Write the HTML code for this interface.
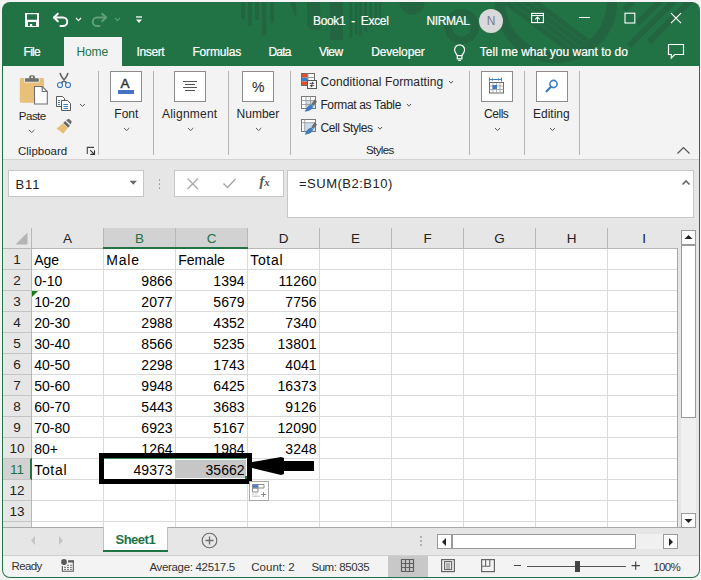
<!DOCTYPE html>
<html><head><meta charset="utf-8"><style>
html,body{margin:0;padding:0;}
body{width:701px;height:580px;overflow:hidden;position:relative;background:#f4f4f4;font-family:"Liberation Sans",sans-serif;}
.b{position:absolute;}
.t{position:absolute;white-space:nowrap;}
</style></head><body>
<div class="b" style="left:0px;top:0px;width:701px;height:580px;background:#f4f4f4;"></div>
<div class="b" style="left:2px;top:2px;width:698px;height:576px;background:#217346;border-radius:8px;"></div>
<svg class="b" style="left:0;top:0" width="701" height="66" viewBox="0 0 701 66">
<defs><clipPath id="wc"><rect x="2" y="2" width="698" height="64" rx="8"/></clipPath></defs>
<g clip-path="url(#wc)" fill="#226540">
<rect x="241" y="0" width="4" height="19"/>
<rect x="248" y="0" width="4" height="26"/>
<rect x="255" y="0" width="4" height="20"/>
<rect x="262" y="0" width="4.3" height="35"/>
<rect x="270" y="0" width="4" height="23"/>
<path d="M289 0 H296.2 V17 Z"/>
<path d="M307 0 H320.2 V30 H314 Q307 30 307 23 Z"/>
<rect x="330" y="0" width="12.8" height="39.7"/>
<rect x="349.6" y="0" width="2.6" height="38"/>
<rect x="354.8" y="0" width="2.7" height="34"/>
<rect x="359" y="0" width="3" height="35.4"/>
<rect x="364" y="0" width="3" height="32"/>
<rect x="369.3" y="0" width="2.7" height="28"/>
<rect x="374.5" y="0" width="2.5" height="26"/>
<rect x="378.7" y="0" width="2.3" height="22"/>
<circle cx="412" cy="2" r="12.6"/>
</g>
<defs><clipPath id="rc"><circle cx="556" cy="1.4" r="50.5"/></clipPath></defs>
<g clip-path="url(#wc)" fill="none" stroke="#226540">
<circle cx="461.5" cy="26.5" r="13.7" stroke-width="7.5"/>
<circle cx="556" cy="1.6" r="56" stroke-width="10.5"/>
</g>
<g clip-path="url(#wc)"><g clip-path="url(#rc)" stroke="#226540" stroke-width="5">
<path d="M500 -2 L580 58 M510 -2 L590 58 M520 -2 L600 58 M530 -2 L610 58"/>
</g></g>
<g clip-path="url(#wc)" stroke="#226540" stroke-width="6">
<path d="M629 46 L677 -2 M649 42 L693 -2 M637 24 L663 -2 M624 10 L636 -2"/>
</g>
</svg>
<div class="b" style="left:3px;top:66px;width:696px;height:93px;background:#f3f3f3;"></div>
<div class="b" style="left:3px;top:159px;width:696px;height:1px;background:#d2d2d2;"></div>
<div class="b" style="left:3px;top:160px;width:696px;height:367px;background:#e6e6e6;"></div>
<div class="b" style="left:3px;top:527px;width:696px;height:28px;background:#e6e6e6;"></div>
<div class="b" style="left:3px;top:555px;width:696px;height:1px;background:#d0d0d0;"></div>
<div class="b" style="left:3px;top:556px;width:696px;height:21px;background:#f3f3f3;border-radius:0 0 7px 7px;"></div>
<div class="b" style="left:64px;top:37px;width:58px;height:29px;background:#f3f3f3;"></div>
<div class="t" style="left:23.5px;top:46.04px;font-size:12px;line-height:12px;color:#ffffff;-webkit-text-stroke:0.2px #fff;letter-spacing:-0.7px;">File</div>
<div class="t" style="left:76.5px;top:46.04px;font-size:12px;line-height:12px;color:#217346;letter-spacing:-0.15px;">Home</div>
<div class="t" style="left:136.5px;top:46.04px;font-size:12px;line-height:12px;color:#ffffff;-webkit-text-stroke:0.2px #fff;letter-spacing:-0.37px;">Insert</div>
<div class="t" style="left:192.4px;top:46.04px;font-size:12px;line-height:12px;color:#ffffff;-webkit-text-stroke:0.2px #fff;letter-spacing:-0.15px;">Formulas</div>
<div class="t" style="left:268.5px;top:46.04px;font-size:12px;line-height:12px;color:#ffffff;-webkit-text-stroke:0.2px #fff;letter-spacing:-0.8px;">Data</div>
<div class="t" style="left:319px;top:46.04px;font-size:12px;line-height:12px;color:#ffffff;-webkit-text-stroke:0.2px #fff;letter-spacing:-0.55px;">View</div>
<div class="t" style="left:371.2px;top:46.04px;font-size:12px;line-height:12px;color:#ffffff;-webkit-text-stroke:0.2px #fff;letter-spacing:-0.15px;">Developer</div>
<div class="t" style="left:479.8px;top:46.34px;font-size:12px;line-height:12px;color:#ffffff;-webkit-text-stroke:0.2px #fff;letter-spacing:0px;">Tell me what you want to do</div>
<div class="t" style="left:313px;top:15.24px;font-size:12px;line-height:12px;color:#ffffff;-webkit-text-stroke:0.2px #fff;letter-spacing:-0.35px;">Book1&nbsp; -&nbsp; Excel</div>
<div class="t" style="left:426.5px;top:15.24px;font-size:12px;line-height:12px;color:#ffffff;-webkit-text-stroke:0.2px #fff;letter-spacing:-0.4px;">NIRMAL</div>
<svg class="b" style="left:24px;top:12px;" width="17" height="16" viewBox="0 0 17 16"><path fill="#fff" fill-rule="evenodd" d="M1 1 H15 V15 H1 Z M3 2.3 V7.7 H13 V2.3 Z M4 10 V13.9 H12 V10 Z"/><rect x="6" y="12" width="2.2" height="2" fill="#fff"/></svg>
<svg class="b" style="left:51px;top:11px;" width="19" height="17" viewBox="0 0 19 17"><g fill="none" stroke="#fff" stroke-width="2" stroke-linecap="round" stroke-linejoin="round">
<path d="M3 6.5 H12 A4.25 4.25 0 0 1 12 15 H9.5"/><path d="M6.8 2.7 L3 6.5 L6.8 10.3"/></g></svg>
<svg class="b" style="left:74.6px;top:17px;" width="7" height="4.6" viewBox="0 0 7 4.6"><path d="M1 1 L3.5 3.6 L6 1" fill="none" stroke="#fff" stroke-width="1.1"/></svg>
<svg class="b" style="left:90px;top:11px;" width="19" height="17" viewBox="0 0 19 17"><g fill="none" stroke="#5f9f7b" stroke-width="2" stroke-linecap="round" stroke-linejoin="round">
<path d="M16 6.5 H7 A4.25 4.25 0 0 0 7 15 H9.5"/><path d="M12.2 2.7 L16 6.5 L12.2 10.3"/></g></svg>
<svg class="b" style="left:113.6px;top:17px;" width="7" height="4.6" viewBox="0 0 7 4.6"><path d="M1 1 L3.5 3.6 L6 1" fill="none" stroke="#5c9c78" stroke-width="1.1"/></svg>
<svg class="b" style="left:135px;top:15px;" width="8" height="9" viewBox="0 0 8 9"><path d="M1 2 H7" stroke="#fff" stroke-width="1.3"/><path d="M1 4.5 H7 L4 8 Z" fill="#fff"/></svg>
<svg class="b" style="left:479px;top:8.5px;" width="24" height="24" viewBox="0 0 24 24"><circle cx="12" cy="12" r="12" fill="#d9d9d9"/></svg>
<div class="t" style="left:391.2px;width:200px;text-align:center;top:15.24px;font-size:12px;line-height:12px;color:#7a7a8a;">N</div>
<svg class="b" style="left:530px;top:12px;" width="16" height="13" viewBox="0 0 16 13"><g fill="none" stroke="#fff" stroke-width="1.1"><rect x="1.6" y="1.4" width="11.8" height="9.2"/><path d="M1.6 3.5 H13.4"/><path d="M7.5 4.8 V10.6 M5.2 7.4 L7.5 5 L9.8 7.4"/></g></svg>
<div class="b" style="left:579px;top:17px;width:11px;height:1.2px;background:#fff;"></div>
<svg class="b" style="left:624px;top:12px;" width="12" height="12" viewBox="0 0 12 12"><rect x="1" y="1.2" width="9.8" height="9.8" fill="none" stroke="#fff" stroke-width="1.1"/></svg>
<svg class="b" style="left:670px;top:12px;" width="12" height="12" viewBox="0 0 12 12"><path d="M1 1.2 L11 11.2 M11 1.2 L1 11.2" stroke="#fff" stroke-width="1.2"/></svg>
<svg class="b" style="left:452px;top:42.6px;" width="16" height="19" viewBox="0 0 16 19"><g fill="none" stroke="#fff" stroke-width="1.2">
<path d="M5.3 12.6 C4.6 10.8 2.6 9.5 2.6 6.8 A5 5 0 0 1 12.6 6.8 C12.6 9.5 10.6 10.8 9.9 12.6"/><rect x="5.3" y="12.6" width="4.6" height="3.2"/><path d="M6.2 17.4 H9"/></g></svg>
<svg class="b" style="left:666px;top:43px;" width="20" height="17" viewBox="0 0 20 17"><path d="M2.5 1.5 H17.5 V11.5 H8.7 L5.3 15 V11.5 H2.5 Z" fill="none" stroke="#fff" stroke-width="1.2"/></svg>
<svg class="b" style="left:19px;top:74px;" width="31" height="32" viewBox="0 0 31 32">
<rect x="0.8" y="3.9" width="24.2" height="24.9" rx="1.5" fill="#e8c07a"/>
<rect x="5.3" y="3.6" width="15.2" height="4.9" fill="#f3f3f3"/>
<rect x="6" y="4.3" width="13.8" height="3.5" rx="0.6" fill="#707070"/>
<rect x="10.1" y="1.2" width="5.9" height="4.5" rx="2" fill="#707070"/>
<circle cx="13.05" cy="3.2" r="0.95" fill="#f3f3f3"/>
<path d="M15.5 12.5 H23.2 L28.3 17.5 V30 H15.5 Z" fill="#fff" stroke="#707070" stroke-width="1.1"/>
<path d="M23.2 12.5 V17.5 H28.3" fill="none" stroke="#707070" stroke-width="1.1"/>
</svg>
<div class="t" style="left:18.8px;top:110.18px;font-size:11.6px;line-height:11.6px;color:#262626;letter-spacing:-0.55px;">Paste</div>
<svg class="b" style="left:28.3px;top:129px;" width="7.4" height="4.6" viewBox="0 0 7.4 4.6"><path d="M1 1 L3.7 3.6 L6.4 1" fill="none" stroke="#555" stroke-width="1"/></svg>
<svg class="b" style="left:56px;top:72px;" width="16" height="17" viewBox="0 0 16 17">
<g fill="none" stroke="#666" stroke-width="1.7" stroke-linecap="round"><path d="M4.3 1.6 Q5.2 5 10.2 10.6 M11.7 1.6 Q10.8 5 5.8 10.6"/></g>
<g fill="none" stroke="#3f7dc0" stroke-width="1.15"><circle cx="4" cy="13" r="2.5"/><circle cx="12" cy="13" r="2.5"/></g>
</svg>
<svg class="b" style="left:55px;top:96px;" width="17" height="16" viewBox="0 0 17 16">
<path d="M1.5 0.5 H7.5 L9.5 2.5 V10.5 H1.5 Z" fill="#fff" stroke="#5a5a5a" stroke-width="1"/>
<path d="M6.5 4.5 H12.5 L15.5 7.5 V14.5 H6.5 Z" fill="#fff" stroke="#5a5a5a" stroke-width="1"/>
<path d="M3 4.5 H5 M3 6.5 H5 M3 8.5 H5 M8.5 8.5 H13 M8.5 10.5 H13 M8.5 12.5 H13" stroke="#3f7dc0" stroke-width="1"/>
</svg>
<svg class="b" style="left:78.5px;top:102.6px;" width="7" height="4.4" viewBox="0 0 7 4.4"><path d="M1 1 L3.5 3.4 L6 1" fill="none" stroke="#555" stroke-width="1"/></svg>
<svg class="b" style="left:56px;top:118px;" width="17" height="17" viewBox="0 0 17 17">
<path d="M10 2 L13 0.8 L15.8 3.6 L14.6 6.6 Z" fill="#6b6b6b"/>
<path d="M9.2 3 L14 7.8 L12 9.8 L7.2 5 Z" fill="#6b6b6b"/>
<path d="M7 5.2 L11.8 10 L7.2 15.8 L0.6 10.6 Z" fill="#e8bf75"/>
</svg>
<div class="t" style="left:18px;top:145.97px;font-size:11.5px;line-height:11.5px;color:#262626;">Clipboard</div>
<svg class="b" style="left:86px;top:146px;" width="10" height="10" viewBox="0 0 10 10"><path d="M1.3 8 V1.4 H8" stroke="#444" stroke-width="1.1" fill="none"/><path d="M4.2 4.2 L7.9 7.9 M4.3 8.4 H8.5 V4.3" stroke="#333" stroke-width="1.1" fill="none"/></svg>
<div class="b" style="left:98px;top:71px;width:1px;height:84px;background:#b4b4b4;"></div>
<div class="b" style="left:153px;top:71px;width:1px;height:84px;background:#b4b4b4;"></div>
<div class="b" style="left:228px;top:71px;width:1px;height:84px;background:#b4b4b4;"></div>
<div class="b" style="left:290px;top:71px;width:1px;height:84px;background:#b4b4b4;"></div>
<div class="b" style="left:469px;top:71px;width:1px;height:84px;background:#b4b4b4;"></div>
<div class="b" style="left:524px;top:71px;width:1px;height:84px;background:#b4b4b4;"></div>
<div class="b" style="left:579px;top:71px;width:1px;height:84px;background:#b4b4b4;"></div>
<div class="b" style="left:110px;top:71px;width:32px;height:31px;background:#fff;border:1px solid #8c8c8c;box-sizing:border-box;"></div>
<div class="t" style="left:120.5px;top:77.27px;font-size:13.5px;line-height:13.5px;color:#333;-webkit-text-stroke:0.45px #333;">A</div>
<div class="b" style="left:118px;top:90px;width:16px;height:4px;background:#4472c4;"></div>
<div class="t" style="left:114.3px;top:107.74px;font-size:12px;line-height:12px;color:#262626;">Font</div>
<svg class="b" style="left:122.5px;top:126.6px;" width="7.3" height="4.6" viewBox="0 0 7.3 4.6"><path d="M1 1 L3.65 3.6 L6.3 1" fill="none" stroke="#555" stroke-width="1"/></svg>
<div class="b" style="left:174px;top:71px;width:32px;height:31px;background:#fff;border:1px solid #8c8c8c;box-sizing:border-box;"></div>
<svg class="b" style="left:182px;top:80px;" width="16" height="12" viewBox="0 0 16 12"><path d="M1 1.5 H15 M3 4.5 H13 M1 7.5 H15 M3 10.5 H13" stroke="#555" stroke-width="1"/></svg>
<div class="t" style="left:162px;top:108.24px;font-size:12px;line-height:12px;color:#262626;letter-spacing:0.22px;">Alignment</div>
<svg class="b" style="left:187px;top:126.6px;" width="7.3" height="4.6" viewBox="0 0 7.3 4.6"><path d="M1 1 L3.65 3.6 L6.3 1" fill="none" stroke="#555" stroke-width="1"/></svg>
<div class="b" style="left:242px;top:71px;width:32px;height:31px;background:#fff;border:1px solid #8c8c8c;box-sizing:border-box;"></div>
<div class="t" style="left:252px;top:80.15px;font-size:14px;line-height:14px;color:#333;-webkit-text-stroke:0.12px #333;">%</div>
<div class="t" style="left:236.6px;top:108.24px;font-size:12px;line-height:12px;color:#262626;">Number</div>
<svg class="b" style="left:254.6px;top:126.6px;" width="7.3" height="4.6" viewBox="0 0 7.3 4.6"><path d="M1 1 L3.65 3.6 L6.3 1" fill="none" stroke="#555" stroke-width="1"/></svg>
<svg class="b" style="left:300px;top:72px;" width="18" height="18" viewBox="0 0 18 18">
<rect x="1.5" y="1.5" width="13" height="12" fill="#fff" stroke="#6b6b6b" stroke-width="1"/>
<rect x="2" y="2" width="6" height="3.5" fill="#e0502f"/><rect x="2" y="5.5" width="6" height="4" fill="#3f7dc0"/><rect x="2" y="9.5" width="6" height="3.5" fill="#e0502f"/>
<path d="M8 1.5 V13.5 M8 5.5 H14.5 M8 9.5 H14.5" stroke="#9a9a9a" stroke-width="1"/>
<rect x="7.5" y="8.5" width="9" height="8" fill="#fff" stroke="#555" stroke-width="1"/>
<path d="M9.8 11.3 H14.2 M9.8 13.7 H14.2 M12.8 9.8 L11.2 15.2" stroke="#333" stroke-width="0.9"/>
</svg>
<div class="t" style="left:320.4px;top:76.34px;font-size:12px;line-height:12px;color:#262626;letter-spacing:0.1px;">Conditional Formatting</div>
<svg class="b" style="left:448.4px;top:79.8px;" width="6" height="4.2" viewBox="0 0 6 4.2"><path d="M1 1 L3.0 3.2 L5 1" fill="none" stroke="#555" stroke-width="1"/></svg>
<svg class="b" style="left:300px;top:95px;" width="18" height="18" viewBox="0 0 18 18">
<rect x="1.5" y="1.5" width="14" height="12" fill="#fff" stroke="#7a7a7a" stroke-width="1"/>
<rect x="6" y="5.5" width="9" height="7.5" fill="#c9dcf0"/>
<path d="M1.5 5.5 H15.5 M1.5 9.5 H15.5 M6 1.5 V13.5 M10.5 1.5 V13.5" stroke="#9a9a9a" stroke-width="0.9"/>
<path d="M14.8 4.3 L17 6.5 L13.3 10.9 L11.3 9.1 Z" fill="#6b6b6b"/>
<path d="M11 9.4 L13.1 11.3 Q12.6 15.9 4.8 16.8 Q6.2 11 11 9.4 Z" fill="#3f7dc0"/>
</svg>
<div class="t" style="left:320.4px;top:98.74px;font-size:12px;line-height:12px;color:#262626;letter-spacing:-0.35px;">Format as Table</div>
<svg class="b" style="left:406px;top:102.5px;" width="6" height="4.2" viewBox="0 0 6 4.2"><path d="M1 1 L3.0 3.2 L5 1" fill="none" stroke="#555" stroke-width="1"/></svg>
<svg class="b" style="left:300px;top:118px;" width="18" height="18" viewBox="0 0 18 18">
<rect x="1.5" y="1.5" width="14" height="12" fill="#fff" stroke="#7a7a7a" stroke-width="1"/>
<rect x="5" y="5" width="10" height="8" fill="#c9dcf0"/>
<path d="M1.5 4.7 H15.5 M4.7 1.5 V13.5" stroke="#9a9a9a" stroke-width="0.9"/>
<path d="M14.8 4.3 L17 6.5 L13.3 10.9 L11.3 9.1 Z" fill="#6b6b6b"/>
<path d="M11 9.4 L13.1 11.3 Q12.6 15.9 4.8 16.8 Q6.2 11 11 9.4 Z" fill="#3f7dc0"/>
</svg>
<div class="t" style="left:320.4px;top:121.84px;font-size:12px;line-height:12px;color:#262626;letter-spacing:-0.4px;">Cell Styles</div>
<svg class="b" style="left:377px;top:125.6px;" width="6" height="4.2" viewBox="0 0 6 4.2"><path d="M1 1 L3.0 3.2 L5 1" fill="none" stroke="#555" stroke-width="1"/></svg>
<div class="t" style="left:366px;top:145.47px;font-size:11.5px;line-height:11.5px;color:#262626;letter-spacing:-0.6px;">Styles</div>
<div class="b" style="left:481px;top:71px;width:32px;height:31px;background:#fff;border:1px solid #8c8c8c;box-sizing:border-box;"></div>
<svg class="b" style="left:488px;top:76px;" width="18" height="20" viewBox="0 0 18 20">
<path d="M1.5 3.5 H13.5 M1.5 1.5 V5.5 M13.5 1.5 V5.5" stroke="#3f7dc0" stroke-width="1.1" fill="none"/>
<path d="M3.2 3.5 L5 2 V5 Z M11.8 3.5 L10 2 V5 Z" fill="#3f7dc0"/>
<rect x="1.5" y="6.5" width="14" height="10.5" fill="#fff" stroke="#6b6b6b" stroke-width="1"/>
<path d="M1.5 10 H15.5 M1.5 13.5 H15.5 M5 6.5 V17 M8.5 6.5 V17 M12 6.5 V17" stroke="#9a9a9a" stroke-width="0.8"/>
<rect x="4.5" y="9" width="4.5" height="4" fill="#3f7dc0"/>
</svg>
<div class="t" style="left:484px;top:108.14px;font-size:12px;line-height:12px;color:#262626;letter-spacing:-0.45px;">Cells</div>
<svg class="b" style="left:494px;top:126.6px;" width="7" height="4.6" viewBox="0 0 7 4.6"><path d="M1 1 L3.5 3.6 L6 1" fill="none" stroke="#555" stroke-width="1"/></svg>
<div class="b" style="left:536px;top:71px;width:32px;height:31px;background:#fff;border:1px solid #8c8c8c;box-sizing:border-box;"></div>
<svg class="b" style="left:544px;top:78px;" width="16" height="16" viewBox="0 0 16 16"><circle cx="9.5" cy="6" r="3.6" fill="none" stroke="#3f7dc0" stroke-width="1.6"/><path d="M7 8.8 L2.5 13.3" stroke="#3f7dc0" stroke-width="2.2" stroke-linecap="round"/></svg>
<div class="t" style="left:533px;top:107.84px;font-size:12px;line-height:12px;color:#262626;">Editing</div>
<svg class="b" style="left:548.5px;top:126.6px;" width="7" height="4.6" viewBox="0 0 7 4.6"><path d="M1 1 L3.5 3.6 L6 1" fill="none" stroke="#555" stroke-width="1"/></svg>
<svg class="b" style="left:676px;top:145px;" width="16" height="10" viewBox="0 0 16 10"><path d="M1.5 8.5 L7.5 2.5 L13.5 8.5" fill="none" stroke="#555" stroke-width="1.2"/></svg>
<div class="b" style="left:8px;top:170px;width:136px;height:27px;background:#fff;border:1px solid #c6c6c6;box-sizing:border-box;"></div>
<div class="t" style="left:15.5px;top:177.50px;font-size:13px;line-height:13px;color:#222;letter-spacing:0.9px;">B11</div>
<svg class="b" style="left:129px;top:180px;" width="9" height="6" viewBox="0 0 9 6"><path d="M0.5 0.8 H8 L4.25 4.8 Z" fill="#6b6b6b"/></svg>
<div class="b" style="left:158.5px;top:179px;width:1.5px;height:1.5px;background:#9a9a9a;border-radius:1px;"></div>
<div class="b" style="left:158.5px;top:183px;width:1.5px;height:1.5px;background:#9a9a9a;border-radius:1px;"></div>
<div class="b" style="left:158.5px;top:187px;width:1.5px;height:1.5px;background:#9a9a9a;border-radius:1px;"></div>
<div class="b" style="left:174px;top:170px;width:110px;height:27px;background:#fff;border:1px solid #c6c6c6;box-sizing:border-box;"></div>
<svg class="b" style="left:186px;top:177px;" width="14" height="13" viewBox="0 0 14 13"><path d="M1.5 1.5 L12 12 M12 1.5 L1.5 12" stroke="#a8a8a8" stroke-width="1.3"/></svg>
<svg class="b" style="left:222px;top:177px;" width="15" height="13" viewBox="0 0 15 13"><path d="M1.5 6.5 L5.5 10.5 L13.5 2" fill="none" stroke="#a8a8a8" stroke-width="1.5"/></svg>
<div class="t" style="left:259.5px;top:174.65px;font-size:14px;line-height:14px;color:#555;font-family:'Liberation Serif',serif;font-weight:bold;"><i>f</i><i style="font-size:11px">x</i></div>
<div class="b" style="left:287px;top:170px;width:407px;height:48px;background:#fff;border:1px solid #c6c6c6;box-sizing:border-box;"></div>
<div class="t" style="left:299px;top:177.30px;font-size:13px;line-height:13px;color:#222;letter-spacing:0.5px;">=SUM(B2:B10)</div>
<svg class="b" style="left:681px;top:179px;" width="10" height="7" viewBox="0 0 10 7"><path d="M1.5 5.5 L5 2 L8.5 5.5" fill="none" stroke="#666" stroke-width="1.6"/></svg>
<div class="b" style="left:32px;top:249px;width:645px;height:278px;background:#fff;"></div>
<div class="b" style="left:104px;top:228px;width:143px;height:20px;background:#d2d2d2;"></div>
<div class="b" style="left:3px;top:459px;width:28px;height:20px;background:#d2d2d2;"></div>
<div class="b" style="left:103px;top:228px;width:1px;height:20px;background:#b8b8b8;"></div>
<div class="b" style="left:175px;top:228px;width:1px;height:20px;background:#b8b8b8;"></div>
<div class="b" style="left:247px;top:228px;width:1px;height:20px;background:#b8b8b8;"></div>
<div class="b" style="left:319px;top:228px;width:1px;height:20px;background:#b8b8b8;"></div>
<div class="b" style="left:391px;top:228px;width:1px;height:20px;background:#b8b8b8;"></div>
<div class="b" style="left:463px;top:228px;width:1px;height:20px;background:#b8b8b8;"></div>
<div class="b" style="left:535px;top:228px;width:1px;height:20px;background:#b8b8b8;"></div>
<div class="b" style="left:607px;top:228px;width:1px;height:20px;background:#b8b8b8;"></div>
<div class="b" style="left:31px;top:228px;width:1px;height:299px;background:#b8b8b8;"></div>
<div class="b" style="left:3px;top:248px;width:674px;height:1px;background:#b8b8b8;"></div>
<div class="b" style="left:103px;top:247px;width:145px;height:2px;background:#217346;"></div>
<div class="b" style="left:30px;top:458px;width:2px;height:22px;background:#217346;"></div>
<div class="b" style="left:3px;top:269px;width:28px;height:1px;background:#c4c4c4;"></div>
<div class="b" style="left:3px;top:290px;width:28px;height:1px;background:#c4c4c4;"></div>
<div class="b" style="left:3px;top:311px;width:28px;height:1px;background:#c4c4c4;"></div>
<div class="b" style="left:3px;top:332px;width:28px;height:1px;background:#c4c4c4;"></div>
<div class="b" style="left:3px;top:353px;width:28px;height:1px;background:#c4c4c4;"></div>
<div class="b" style="left:3px;top:374px;width:28px;height:1px;background:#c4c4c4;"></div>
<div class="b" style="left:3px;top:395px;width:28px;height:1px;background:#c4c4c4;"></div>
<div class="b" style="left:3px;top:416px;width:28px;height:1px;background:#c4c4c4;"></div>
<div class="b" style="left:3px;top:437px;width:28px;height:1px;background:#c4c4c4;"></div>
<div class="b" style="left:3px;top:458px;width:28px;height:1px;background:#c4c4c4;"></div>
<div class="b" style="left:3px;top:479px;width:28px;height:1px;background:#c4c4c4;"></div>
<div class="b" style="left:3px;top:500px;width:28px;height:1px;background:#c4c4c4;"></div>
<div class="b" style="left:3px;top:521px;width:28px;height:1px;background:#c4c4c4;"></div>
<div class="b" style="left:32px;top:269px;width:645px;height:1px;background:#dadada;"></div>
<div class="b" style="left:32px;top:290px;width:645px;height:1px;background:#dadada;"></div>
<div class="b" style="left:32px;top:311px;width:645px;height:1px;background:#dadada;"></div>
<div class="b" style="left:32px;top:332px;width:645px;height:1px;background:#dadada;"></div>
<div class="b" style="left:32px;top:353px;width:645px;height:1px;background:#dadada;"></div>
<div class="b" style="left:32px;top:374px;width:645px;height:1px;background:#dadada;"></div>
<div class="b" style="left:32px;top:395px;width:645px;height:1px;background:#dadada;"></div>
<div class="b" style="left:32px;top:416px;width:645px;height:1px;background:#dadada;"></div>
<div class="b" style="left:32px;top:437px;width:645px;height:1px;background:#dadada;"></div>
<div class="b" style="left:32px;top:458px;width:645px;height:1px;background:#dadada;"></div>
<div class="b" style="left:32px;top:479px;width:645px;height:1px;background:#dadada;"></div>
<div class="b" style="left:32px;top:500px;width:645px;height:1px;background:#dadada;"></div>
<div class="b" style="left:32px;top:521px;width:645px;height:1px;background:#dadada;"></div>
<div class="b" style="left:103px;top:249px;width:1px;height:278px;background:#dadada;"></div>
<div class="b" style="left:175px;top:249px;width:1px;height:278px;background:#dadada;"></div>
<div class="b" style="left:247px;top:249px;width:1px;height:278px;background:#dadada;"></div>
<div class="b" style="left:319px;top:249px;width:1px;height:278px;background:#dadada;"></div>
<div class="b" style="left:391px;top:249px;width:1px;height:278px;background:#dadada;"></div>
<div class="b" style="left:463px;top:249px;width:1px;height:278px;background:#dadada;"></div>
<div class="b" style="left:535px;top:249px;width:1px;height:278px;background:#dadada;"></div>
<div class="b" style="left:607px;top:249px;width:1px;height:278px;background:#dadada;"></div>
<div class="b" style="left:677px;top:248px;width:1px;height:279px;background:#a6a6a6;"></div>
<svg class="b" style="left:15px;top:232px;" width="13" height="13" viewBox="0 0 13 13"><path d="M0.5 12.5 H12.5 V0.5 Z" fill="#b4b4b4"/></svg>
<div class="t" style="left:-32.5px;width:200px;text-align:center;top:232.17px;font-size:13.5px;line-height:13.5px;color:#222;">A</div>
<div class="t" style="left:39.5px;width:200px;text-align:center;top:232.17px;font-size:13.5px;line-height:13.5px;color:#217346;">B</div>
<div class="t" style="left:111.5px;width:200px;text-align:center;top:232.17px;font-size:13.5px;line-height:13.5px;color:#217346;">C</div>
<div class="t" style="left:183.5px;width:200px;text-align:center;top:232.17px;font-size:13.5px;line-height:13.5px;color:#222;">D</div>
<div class="t" style="left:255.5px;width:200px;text-align:center;top:232.17px;font-size:13.5px;line-height:13.5px;color:#222;">E</div>
<div class="t" style="left:327.5px;width:200px;text-align:center;top:232.17px;font-size:13.5px;line-height:13.5px;color:#222;">F</div>
<div class="t" style="left:399.5px;width:200px;text-align:center;top:232.17px;font-size:13.5px;line-height:13.5px;color:#222;">G</div>
<div class="t" style="left:471.5px;width:200px;text-align:center;top:232.17px;font-size:13.5px;line-height:13.5px;color:#222;">H</div>
<div class="t" style="left:544.1px;width:200px;text-align:center;top:232.17px;font-size:13.5px;line-height:13.5px;color:#222;">I</div>
<div class="t" style="left:-83px;width:200px;text-align:center;top:253.47px;font-size:13.5px;line-height:13.5px;color:#222;">1</div>
<div class="t" style="left:-83px;width:200px;text-align:center;top:274.47px;font-size:13.5px;line-height:13.5px;color:#222;">2</div>
<div class="t" style="left:-83px;width:200px;text-align:center;top:295.47px;font-size:13.5px;line-height:13.5px;color:#222;">3</div>
<div class="t" style="left:-83px;width:200px;text-align:center;top:316.47px;font-size:13.5px;line-height:13.5px;color:#222;">4</div>
<div class="t" style="left:-83px;width:200px;text-align:center;top:337.47px;font-size:13.5px;line-height:13.5px;color:#222;">5</div>
<div class="t" style="left:-83px;width:200px;text-align:center;top:358.47px;font-size:13.5px;line-height:13.5px;color:#222;">6</div>
<div class="t" style="left:-83px;width:200px;text-align:center;top:379.47px;font-size:13.5px;line-height:13.5px;color:#222;">7</div>
<div class="t" style="left:-83px;width:200px;text-align:center;top:400.47px;font-size:13.5px;line-height:13.5px;color:#222;">8</div>
<div class="t" style="left:-83px;width:200px;text-align:center;top:421.47px;font-size:13.5px;line-height:13.5px;color:#222;">9</div>
<div class="t" style="left:-83px;width:200px;text-align:center;top:442.47px;font-size:13.5px;line-height:13.5px;color:#222;">10</div>
<div class="t" style="left:-83px;width:200px;text-align:center;top:463.47px;font-size:13.5px;line-height:13.5px;color:#217346;">11</div>
<div class="t" style="left:-83px;width:200px;text-align:center;top:484.47px;font-size:13.5px;line-height:13.5px;color:#222;">12</div>
<div class="t" style="left:-83px;width:200px;text-align:center;top:505.47px;font-size:13.5px;line-height:13.5px;color:#222;">13</div>
<div class="t" style="left:34.2px;top:253.35px;font-size:14px;line-height:14px;color:#000;">Age</div>
<div class="t" style="left:106.2px;top:253.35px;font-size:14px;line-height:14px;color:#000;letter-spacing:0.8px;">Male</div>
<div class="t" style="left:178.2px;top:253.35px;font-size:14px;line-height:14px;color:#000;">Female</div>
<div class="t" style="left:250.2px;top:253.35px;font-size:14px;line-height:14px;color:#000;letter-spacing:0.7px;">Total</div>
<div class="t" style="left:34.2px;top:274.35px;font-size:14px;line-height:14px;color:#000;">0-10</div>
<div class="t" style="right:528.5px;top:274.35px;font-size:14px;line-height:14px;color:#000;">9866</div>
<div class="t" style="right:456.5px;top:274.35px;font-size:14px;line-height:14px;color:#000;">1394</div>
<div class="t" style="right:384.5px;top:274.35px;font-size:14px;line-height:14px;color:#000;">11260</div>
<div class="t" style="left:34.2px;top:295.35px;font-size:14px;line-height:14px;color:#000;">10-20</div>
<div class="t" style="right:528.5px;top:295.35px;font-size:14px;line-height:14px;color:#000;">2077</div>
<div class="t" style="right:456.5px;top:295.35px;font-size:14px;line-height:14px;color:#000;">5679</div>
<div class="t" style="right:384.5px;top:295.35px;font-size:14px;line-height:14px;color:#000;">7756</div>
<div class="t" style="left:34.2px;top:316.35px;font-size:14px;line-height:14px;color:#000;">20-30</div>
<div class="t" style="right:528.5px;top:316.35px;font-size:14px;line-height:14px;color:#000;">2988</div>
<div class="t" style="right:456.5px;top:316.35px;font-size:14px;line-height:14px;color:#000;">4352</div>
<div class="t" style="right:384.5px;top:316.35px;font-size:14px;line-height:14px;color:#000;">7340</div>
<div class="t" style="left:34.2px;top:337.35px;font-size:14px;line-height:14px;color:#000;">30-40</div>
<div class="t" style="right:528.5px;top:337.35px;font-size:14px;line-height:14px;color:#000;">8566</div>
<div class="t" style="right:456.5px;top:337.35px;font-size:14px;line-height:14px;color:#000;">5235</div>
<div class="t" style="right:384.5px;top:337.35px;font-size:14px;line-height:14px;color:#000;">13801</div>
<div class="t" style="left:34.2px;top:358.35px;font-size:14px;line-height:14px;color:#000;">40-50</div>
<div class="t" style="right:528.5px;top:358.35px;font-size:14px;line-height:14px;color:#000;">2298</div>
<div class="t" style="right:456.5px;top:358.35px;font-size:14px;line-height:14px;color:#000;">1743</div>
<div class="t" style="right:384.5px;top:358.35px;font-size:14px;line-height:14px;color:#000;">4041</div>
<div class="t" style="left:34.2px;top:379.35px;font-size:14px;line-height:14px;color:#000;">50-60</div>
<div class="t" style="right:528.5px;top:379.35px;font-size:14px;line-height:14px;color:#000;">9948</div>
<div class="t" style="right:456.5px;top:379.35px;font-size:14px;line-height:14px;color:#000;">6425</div>
<div class="t" style="right:384.5px;top:379.35px;font-size:14px;line-height:14px;color:#000;">16373</div>
<div class="t" style="left:34.2px;top:400.35px;font-size:14px;line-height:14px;color:#000;">60-70</div>
<div class="t" style="right:528.5px;top:400.35px;font-size:14px;line-height:14px;color:#000;">5443</div>
<div class="t" style="right:456.5px;top:400.35px;font-size:14px;line-height:14px;color:#000;">3683</div>
<div class="t" style="right:384.5px;top:400.35px;font-size:14px;line-height:14px;color:#000;">9126</div>
<div class="t" style="left:34.2px;top:421.35px;font-size:14px;line-height:14px;color:#000;">70-80</div>
<div class="t" style="right:528.5px;top:421.35px;font-size:14px;line-height:14px;color:#000;">6923</div>
<div class="t" style="right:456.5px;top:421.35px;font-size:14px;line-height:14px;color:#000;">5167</div>
<div class="t" style="right:384.5px;top:421.35px;font-size:14px;line-height:14px;color:#000;">12090</div>
<div class="t" style="left:34.2px;top:442.35px;font-size:14px;line-height:14px;color:#000;">80+</div>
<div class="t" style="right:528.5px;top:442.35px;font-size:14px;line-height:14px;color:#000;">1264</div>
<div class="t" style="right:456.5px;top:442.35px;font-size:14px;line-height:14px;color:#000;">1984</div>
<div class="t" style="right:384.5px;top:442.35px;font-size:14px;line-height:14px;color:#000;">3248</div>
<div class="t" style="left:34.2px;top:463.35px;font-size:14px;line-height:14px;color:#000;letter-spacing:0.7px;">Total</div>
<div class="t" style="right:528.5px;top:463.35px;font-size:14px;line-height:14px;color:#000;">49373</div>
<div class="b" style="left:175px;top:459.5px;width:71px;height:18px;background:#c6c6c6;"></div>
<div class="t" style="right:456.5px;top:463.35px;font-size:14px;line-height:14px;color:#000;">35662</div>
<svg class="b" style="left:32px;top:290.5px;" width="7" height="7" viewBox="0 0 7 7"><path d="M0 0 H6 L0 6 Z" fill="#118014"/></svg>
<div class="b" style="left:103px;top:458px;width:143px;height:1px;background:#3d8a5f;"></div>
<div class="b" style="left:245px;top:476px;width:3px;height:3px;background:#217346;"></div>
<div class="b" style="left:99px;top:453px;width:152.5px;height:31px;border:5px solid #000;box-sizing:border-box;"></div>
<svg class="b" style="left:250px;top:455px;" width="66" height="22" viewBox="0 0 66 22"><path d="M2 7 L31 2 L34 3 L34 6 L64 6 L64 16 L34 16 L34 19 L31 20 L2 13 Z" fill="#000"/></svg>
<svg class="b" style="left:249px;top:481px;" width="21" height="21" viewBox="0 0 21 21">
<rect x="0.5" y="0.5" width="19" height="19" fill="#fff" stroke="#a8a8a8" stroke-width="1"/>
<rect x="3.5" y="3.5" width="5.5" height="3.5" fill="#3d7ff0"/>
<path d="M3.5 3.5 H15 V7 H3.5 Z M3.5 7 H9 V11 H3.5 Z M9 3.5 V7" fill="none" stroke="#8a8a8a" stroke-width="1"/>
<path d="M3.5 13.2 H4.5 M6.5 13.2 H7.5 M3.5 15.2 H4.5 M5.5 15.2 H6.5 M7.5 15.2 H8.5 M9.5 15.2 H10.5" stroke="#8a8a8a" stroke-width="1"/>
<path d="M12 13.5 H17 M14.5 11 V16" stroke="#8a8a8a" stroke-width="1"/>
</svg>
<div class="b" style="left:681px;top:230px;width:15px;height:297px;background:#f0f0f0;"></div>
<div class="b" style="left:681px;top:230px;width:15px;height:15px;background:#fff;border:1px solid #9a9a9a;box-sizing:border-box;"></div>
<svg class="b" style="left:684px;top:234px;" width="9" height="6" viewBox="0 0 9 6"><path d="M0.5 5 L4.5 1 L8.5 5 Z" fill="#222"/></svg>
<div class="b" style="left:681px;top:244px;width:15px;height:174px;background:#fff;border:1px solid #9a9a9a;border-top:2px solid #9a9a9a;box-sizing:border-box;"></div>
<div class="b" style="left:681px;top:513px;width:15px;height:15px;background:#fff;border:1px solid #9a9a9a;box-sizing:border-box;"></div>
<svg class="b" style="left:684px;top:518px;" width="9" height="6" viewBox="0 0 9 6"><path d="M0.5 1 L4.5 5 L8.5 1 Z" fill="#222"/></svg>
<div class="b" style="left:3px;top:527px;width:678px;height:1px;background:#a8a8a8;"></div>
<svg class="b" style="left:29px;top:535px;" width="8" height="11" viewBox="0 0 8 11"><path d="M6 1 L2 5.5 L6 10 Z" fill="#c4c4c4"/></svg>
<svg class="b" style="left:57px;top:535px;" width="8" height="11" viewBox="0 0 8 11"><path d="M2 1 L6 5.5 L2 10 Z" fill="#c4c4c4"/></svg>
<div class="b" style="left:103px;top:527px;width:65px;height:25px;background:#fff;border:1px solid #c0c0c0;border-top:none;box-sizing:border-box;"></div>
<div class="b" style="left:103px;top:550px;width:65px;height:2px;background:#217346;"></div>
<div class="t" style="left:115.5px;top:532.60px;font-size:13px;line-height:13px;color:#217346;letter-spacing:-0.5px;"><b>Sheet1</b></div>
<svg class="b" style="left:201px;top:532px;" width="17" height="17" viewBox="0 0 17 17"><circle cx="8.5" cy="8.5" r="7.3" fill="none" stroke="#6b6b6b" stroke-width="1.1"/><path d="M8.5 4.5 V12.5 M4.5 8.5 H12.5" stroke="#6b6b6b" stroke-width="1.3"/></svg>
<div class="b" style="left:420px;top:536px;width:1.5px;height:1.5px;background:#a0a0a0;border-radius:1px;"></div>
<div class="b" style="left:420px;top:540px;width:1.5px;height:1.5px;background:#a0a0a0;border-radius:1px;"></div>
<div class="b" style="left:420px;top:544px;width:1.5px;height:1.5px;background:#a0a0a0;border-radius:1px;"></div>
<div class="b" style="left:437px;top:534px;width:241px;height:15px;background:#f0f0f0;"></div>
<div class="b" style="left:437px;top:534px;width:15px;height:15px;background:#fff;border:1px solid #9a9a9a;box-sizing:border-box;"></div>
<svg class="b" style="left:441px;top:536.5px;" width="6" height="10" viewBox="0 0 6 10"><path d="M5 1 L1 5 L5 9 Z" fill="#222"/></svg>
<div class="b" style="left:451px;top:534px;width:185px;height:15px;background:#fff;border:1px solid #9a9a9a;border-left:2px solid #9a9a9a;box-sizing:border-box;"></div>
<div class="b" style="left:663px;top:534px;width:15px;height:15px;background:#fff;border:1px solid #9a9a9a;box-sizing:border-box;"></div>
<svg class="b" style="left:668px;top:536.5px;" width="6" height="10" viewBox="0 0 6 10"><path d="M1 1 L5 5 L1 9 Z" fill="#222"/></svg>
<div class="t" style="left:11.5px;top:560.97px;font-size:11.5px;line-height:11.5px;color:#333;letter-spacing:-0.6px;">Ready</div>
<svg class="b" style="left:60px;top:558px;" width="16" height="15" viewBox="0 0 16 15"><circle cx="4" cy="4" r="2.9" fill="#5a5a5a"/>
<rect x="8.1" y="2.2" width="5.7" height="2.3" fill="#5a5a5a"/>
<path d="M13.3 2.5 V13.3 H2.4 V8" fill="none" stroke="#5a5a5a" stroke-width="1.1"/>
<path d="M7.2 7.3 H8.8 M10.2 7.3 H11.8 M4.2 9.4 H5.8 M7.2 9.4 H8.8 M10.2 9.4 H11.8 M4.2 11.4 H5.8 M7.2 11.4 H8.8 M10.2 11.4 H11.8" stroke="#5a5a5a" stroke-width="1"/></svg>
<div class="t" style="left:149.4px;top:561.57px;font-size:11.5px;line-height:11.5px;color:#333;letter-spacing:-0.32px;">Average: 42517.5</div>
<div class="t" style="left:251.3px;top:561.57px;font-size:11.5px;line-height:11.5px;color:#333;">Count: 2</div>
<div class="t" style="left:311.4px;top:561.57px;font-size:11.5px;line-height:11.5px;color:#333;letter-spacing:-0.42px;">Sum: 85035</div>
<div class="b" style="left:388px;top:556px;width:40px;height:21px;background:#c8c8c8;"></div>
<svg class="b" style="left:400px;top:558px;" width="16" height="16" viewBox="0 0 16 16"><path d="M1.5 1.5 H13.5 V13.5 H1.5 Z M1.5 5.5 H13.5 M1.5 9.5 H13.5 M5.5 1.5 V13.5 M9.5 1.5 V13.5" fill="none" stroke="#5f5f5f" stroke-width="1.2"/></svg>
<svg class="b" style="left:440px;top:558px;" width="16" height="15" viewBox="0 0 16 15"><rect x="1.6" y="1.6" width="12.8" height="12" fill="none" stroke="#666" stroke-width="1.2"/><rect x="4.6" y="3.6" width="7" height="8" fill="none" stroke="#666" stroke-width="1.1"/><path d="M6 6 H10.2 M6 8 H10.2 M6 10 H10.2" stroke="#666" stroke-width="0.9"/></svg>
<svg class="b" style="left:480px;top:558px;" width="16" height="15" viewBox="0 0 16 15"><rect x="1.6" y="1.6" width="12.8" height="12" fill="none" stroke="#666" stroke-width="1.2"/><path d="M1.6 8.2 H9.8 V1.6 M5.6 1.6 V8.2" fill="none" stroke="#666" stroke-width="1.1"/></svg>
<div class="b" style="left:513.7px;top:565px;width:7.8px;height:1.3px;background:#444;"></div>
<div class="b" style="left:526.7px;top:565.8px;width:99.3px;height:1.2px;background:#555;"></div>
<div class="b" style="left:575px;top:561px;width:5px;height:10.6px;background:#444;"></div>
<svg class="b" style="left:631px;top:561px;" width="10" height="10" viewBox="0 0 10 10"><path d="M4.7 0.4 V8.8 M0.6 4.6 H8.9" stroke="#444" stroke-width="1.2"/></svg>
<div class="t" style="left:653.3px;top:561.57px;font-size:11.5px;line-height:11.5px;color:#333;letter-spacing:-0.7px;">100%</div>
</body></html>
